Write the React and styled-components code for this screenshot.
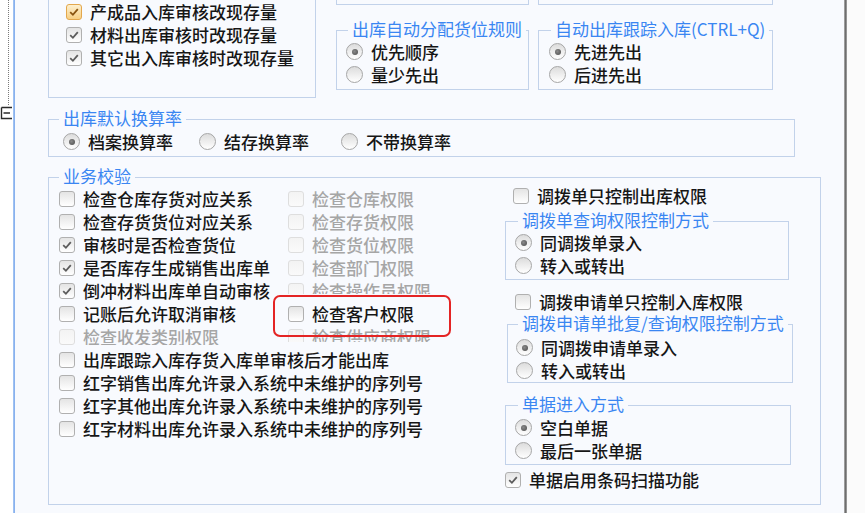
import React from "react";
import styled, { createGlobalStyle } from "styled-components";

const GlobalStyle = createGlobalStyle`
    html, body {
        margin: 0;
        padding: 0;
        background: #ffffff;
    }
    body {
        font-family: "Noto Sans CJK SC", "Microsoft YaHei", sans-serif;
    }
`

const Screen = styled.div`
    display: flex;
    width: 865px;
    height: 513px;
    overflow: hidden;
    background: #ffffff;
`

const TreeGutter = styled.div`
    width: 13px;
    flex: none;
    background: #ffffff;
`

const Splitter = styled.div`
    width: 2px;
    flex: none;
    background: linear-gradient(to right, #a9c8f4, #7eaaec);
`

const Form = styled.div`
    width: 829px;
    flex: none;
    box-sizing: border-box;
    padding-left: 33px;
    background: #f8fafe;
    display: flex;
    flex-direction: column;
    font-size: 17px;
    font-weight: 500;
    color: #161616;
`

const RightEdge = styled.div`
    width: 3px;
    flex: none;
    background: linear-gradient(to right, #b4b4b4, #6e6e6e, #a8a8a8);
`

const Outside = styled.div`
    flex: 1;
    background: #fbfbfb;
`

const TopRow = styled.div`
    display: flex;
    height: 98px;
`

const StockPanel = styled.div`
    width: 268px;
    height: 98px;
    box-sizing: border-box;
    border: 1px solid #c2d2ea;
    border-top: none;
    padding-left: 17px;
    display: flex;
    flex-direction: column;
`

const TopRight = styled.div`
    margin-left: 20px;
    display: flex;
    flex-direction: column;
`

const Pair = styled.div`
    display: flex;
    gap: 9px;
    margin-top: ${p => p.$mt || 0}px;
`

const Stub = styled.div`
    width: ${p => p.$w}px;
    height: 5px;
    box-sizing: border-box;
    border: 1px solid #c2d2ea;
    border-top: none;
`

const Group = styled.fieldset`
    margin: ${p => p.$mt || 0}px 0 0 ${p => p.$ml || 0}px;
    padding: 0;
    min-width: 0;
    width: ${p => p.$w}px;
    box-sizing: border-box;
    border: 1px solid #c2d2ea;
    border-radius: 0;
`

const Legend = styled.legend`
    margin-left: ${p => p.$lx || 10}px;
    padding: 0 4px;
    height: 20px;
    line-height: 18px;
    font-size: 17px;
    font-weight: 400;
    color: #3a86f2;
    white-space: nowrap;
`

const Body = styled.div`
    display: flex;
    flex-direction: ${p => p.$row ? "row" : "column"};
    padding: ${p => p.$pt || 0}px 0 ${p => p.$pb || 0}px ${p => p.$pl || 9}px;
    min-height: ${p => p.$minh || 0}px;
`

const Row = styled.label`
    display: flex;
    align-items: center;
    gap: ${p => p.$gap || 8}px;
    height: 23px;
    flex: none;
    width: ${p => p.$w ? `${p.$w}px` : "auto"};
    margin: ${p => p.$mt || 0}px 0 0 ${p => p.$ml || 0}px;
    white-space: nowrap;
    line-height: 18px;
    color: ${p => p.$disabled ? "#a6a6a6" : "#161616"};
    clip-path: ${p => p.$cut ? `inset(0 0 ${p.$cut}px 0)` : "none"};
`

const Box = styled.span`
    width: 16px;
    height: 16px;
    flex: none;
    box-sizing: border-box;
    border-radius: 3px;
    border: 1px solid ${p => p.$hot ? "#e3a74c" : p.$disabled ? "#dedede" : "#b0b0b0"};
    background: ${p => p.$hot
        ? "linear-gradient(#fdf0cf, #f7cf83)"
        : p.$disabled
            ? "linear-gradient(#f3f3f3, #fafafa)"
            : "linear-gradient(#e4e4e4, #ffffff)"};
    display: flex;
    align-items: center;
    justify-content: center;
`

const Circle = styled.span`
    width: 17px;
    height: 17px;
    flex: none;
    box-sizing: border-box;
    border-radius: 50%;
    border: 1px solid #a6a6a6;
    background: linear-gradient(#dcdcdc, #ffffff);
    display: flex;
    align-items: center;
    justify-content: center;
`

const Dot = styled.span`
    width: 6px;
    height: 6px;
    border-radius: 50%;
    background: radial-gradient(circle at 40% 40%, #8a8a8a, #4a4a4a);
`

const Columns = styled.div`
    display: flex;
`

const Col = styled.div`
    display: flex;
    flex-direction: column;
    width: ${p => p.$w ? `${p.$w}px` : "auto"};
    margin-top: ${p => p.$mt || 0}px;
    position: relative;
`

const Highlight = styled.div`
    position: absolute;
    left: -15px;
    top: 108px;
    width: 178px;
    height: 42px;
    box-sizing: border-box;
    border: 2px solid #e42424;
    border-radius: 7px;
    pointer-events: none;
`

const Check = ({ on, hot, disabled }) => (
    <Box $hot={hot} $disabled={disabled}>
        {on && (
            <svg width="12" height="12" viewBox="0 0 12 12">
                <path d="M2.2 6.2 L4.9 8.8 L9.8 3.2" fill="none"
                    stroke={hot ? "#8a5410" : "#5c5c5c"} strokeWidth="1.8" />
            </svg>
        )}
    </Box>
)

const CheckRow = ({ label, on, hot, disabled, cut, ml, mt }) => (
    <Row $disabled={disabled} $cut={cut} $ml={ml} $mt={mt}>
        <Check on={on} hot={hot} disabled={disabled} />
        {label}
    </Row>
)

const RadioRow = ({ label, on, w }) => (
    <Row $w={w}>
        <Circle>{on && <Dot />}</Circle>
        {label}
    </Row>
)

const TreeLine = () => (
    <svg width="13" height="125" viewBox="0 0 13 125">
        <line x1="8.5" y1="0" x2="8.5" y2="106" stroke="#7a7a7a"
            strokeDasharray="1 1" />
        <path d="M1.5 107.5 H12 M1.5 107.5 V118.5 H12 M3.5 113 H10"
            fill="none" stroke="#2a2a2a" strokeWidth="1.4" />
    </svg>
)

const leftChecks = [
    { label: "检查仓库存货对应关系" },
    { label: "检查存货货位对应关系" },
    { label: "审核时是否检查货位", on: true },
    { label: "是否库存生成销售出库单", on: true },
    { label: "倒冲材料出库单自动审核", on: true },
    { label: "记账后允许取消审核" },
    { label: "检查收发类别权限", disabled: true, cut: 3 },
]

const midChecks = [
    { label: "检查仓库权限", disabled: true },
    { label: "检查存货权限", disabled: true },
    { label: "检查货位权限", disabled: true },
    { label: "检查部门权限", disabled: true },
    { label: "检查操作员权限", disabled: true, cut: 8 },
    { label: "检查客户权限" },
    { label: "检查供应商权限", disabled: true, cut: 6 },
]

const longChecks = [
    "出库跟踪入库存货入库单审核后才能出库",
    "红字销售出库允许录入系统中未维护的序列号",
    "红字其他出库允许录入系统中未维护的序列号",
    "红字材料出库允许录入系统中未维护的序列号",
]

const App = () => {
    return (
        <Screen>
            <GlobalStyle />
            <TreeGutter>
                <TreeLine />
            </TreeGutter>
            <Splitter />
            <Form>
                <TopRow>
                    <StockPanel>
                        <CheckRow label="产成品入库审核改现存量" on hot />
                        <CheckRow label="材料出库审核时改现存量" on />
                        <CheckRow label="其它出入库审核时改现存量" on />
                    </StockPanel>
                    <TopRight>
                        <Pair>
                            <Stub $w={193} />
                            <Stub $w={235} />
                        </Pair>
                        <Pair $mt={15}>
                            <Group $w={193}>
                                <Legend $lx={11}>出库自动分配货位规则</Legend>
                                <Body $pl={9} $pb={3}>
                                    <RadioRow label="优先顺序" on />
                                    <RadioRow label="量少先出" />
                                </Body>
                            </Group>
                            <Group $w={235}>
                                <Legend $lx={12}>自动出库跟踪入库(CTRL+Q)</Legend>
                                <Body $pl={10} $pb={3}>
                                    <RadioRow label="先进先出" on />
                                    <RadioRow label="后进先出" />
                                </Body>
                            </Group>
                        </Pair>
                    </TopRight>
                </TopRow>

                <Group $w={747} $mt={11}>
                    <Legend $lx={10}>出库默认换算率</Legend>
                    <Body $row $pl={14} $pt={1} $pb={3}>
                        <RadioRow label="档案换算率" on w={136} />
                        <RadioRow label="结存换算率" w={142} />
                        <RadioRow label="不带换算率" />
                    </Body>
                </Group>

                <Group $w={773} $mt={10}>
                    <Legend $lx={10}>业务校验</Legend>
                    <Body $row $pl={10} $minh={317}>
                        <Col>
                            <Columns>
                                <Col $w={229}>
                                    {leftChecks.map(item => (
                                        <CheckRow key={item.label} {...item} />
                                    ))}
                                </Col>
                                <Col $w={217}>
                                    {midChecks.map(item => (
                                        <CheckRow key={item.label} {...item} />
                                    ))}
                                    <Highlight />
                                </Col>
                            </Columns>
                            {longChecks.map(label => (
                                <CheckRow key={label} label={label} />
                            ))}
                        </Col>
                        <Col $w={288} $mt={-3}>
                            <CheckRow label="调拨单只控制出库权限" ml={8} />
                            <Group $w={284} $mt={4}>
                                <Legend $lx={12}>调拨单查询权限控制方式</Legend>
                                <Body $pl={9} $pb={2}>
                                    <RadioRow label="同调拨单录入" on />
                                    <RadioRow label="转入或转出" />
                                </Body>
                            </Group>
                            <CheckRow label="调拨申请单只控制入库权限" ml={10} mt={10} />
                            <Group $w={286} $ml={2} $mt={1}>
                                <Legend $lx={10}>调拨申请单批复/查询权限控制方式</Legend>
                                <Body $pl={8} $pt={2}>
                                    <RadioRow label="同调拨申请单录入" on />
                                    <RadioRow label="转入或转出" />
                                </Body>
                            </Group>
                            <Group $w={286} $mt={12}>
                                <Legend $lx={12}>单据进入方式</Legend>
                                <Body $pl={9} $pt={1} $pb={2}>
                                    <RadioRow label="空白单据" on />
                                    <RadioRow label="最后一张单据" />
                                </Body>
                            </Group>
                            <CheckRow label="单据启用条码扫描功能" on mt={3} />
                        </Col>
                    </Body>
                </Group>
            </Form>
            <RightEdge />
            <Outside />
        </Screen>
    )
}

export default App;
